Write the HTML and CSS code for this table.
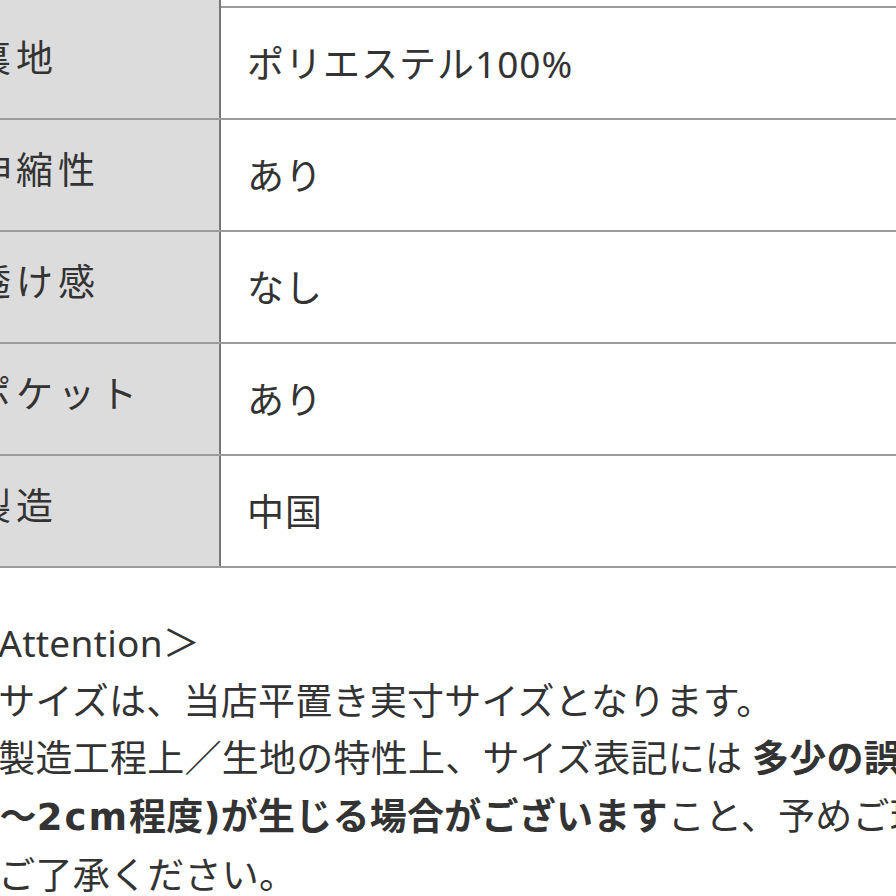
FILE: index.html
```html
<!DOCTYPE html>
<html lang="ja">
<head>
<meta charset="utf-8">
<title>Spec</title>
<link rel="stylesheet" href="styles.css">
</head>
<body>
<div class="page">
  <div class="spec">
    <div class="row row-top"><div class="lbl"></div><div class="val"></div></div>
    <div class="row"><div class="lbl">裏地</div><div class="val">ポリエステル100%</div></div>
    <div class="row"><div class="lbl">伸縮性</div><div class="val">あり</div></div>
    <div class="row"><div class="lbl">透け感</div><div class="val">なし</div></div>
    <div class="row"><div class="lbl">ポケット</div><div class="val">あり</div></div>
    <div class="row"><div class="lbl">製造</div><div class="val">中国</div></div>
  </div>
  <div class="notes">
    <p class="line">＜Attention＞</p>
    <p class="line">・サイズは、当店平置き実寸サイズとなります。</p>
    <p class="line">・製造工程上／生地の特性上、サイズ表記には <b>多少の誤差</b></p>
    <p class="line"><b><span class="lat">(</span>1〜<span class="lat num">2cm</span>程度<span class="lat">)</span>が生じる場合がございます</b>こと、予めご理解の</p>
    <p class="line">上ご了承ください。</p>
  </div>
  <div class="rule"></div>
</div>
</body>
</html>
```

FILE: styles.css
```css
html, body {
  margin: 0;
  padding: 0;
  background: #ffffff;
}
body {
  width: 896px;
  height: 896px;
  overflow: hidden;
  font-family: "Noto Sans", "Noto Sans CJK JP", sans-serif;
  color: #333333;
}
.page {
  width: 896px;
  height: 896px;
  overflow: hidden;
}
.spec {
  margin-left: -52px;
  width: 1000px;
}
.row {
  display: flex;
  height: 112px;
  box-sizing: border-box;
  border-bottom: 2px solid #9c9c9c;
  font-size: 37px;
  line-height: 1;
}
.row-top {
  height: 8px;
}
.lbl {
  width: 273px;
  box-sizing: border-box;
  background: #dcdcdc;
  border-right: 2px solid #777777;
  padding-left: 26px;
  padding-bottom: 12px;
  display: flex;
  align-items: center;
  white-space: nowrap;
  letter-spacing: 5px;
}
.val {
  flex: 1;
  padding-left: 26px;
  display: flex;
  align-items: center;
  white-space: nowrap;
  letter-spacing: 1px;
}
.notes {
  margin-top: 46px;
  margin-left: -39px;
  font-size: 37px;
  line-height: 57.5px;
  letter-spacing: 0.25px;
}
.line {
  margin: 0;
  white-space: nowrap;
}
.line b {
  font-weight: 700;
}
.lat {
  font-family: "DejaVu Sans", "Noto Sans", sans-serif;
}
.num {
  letter-spacing: 2px;
}
.rule {
  margin-top: -8px;
  height: 3px;
  background: #bdbdbd;
}
```
